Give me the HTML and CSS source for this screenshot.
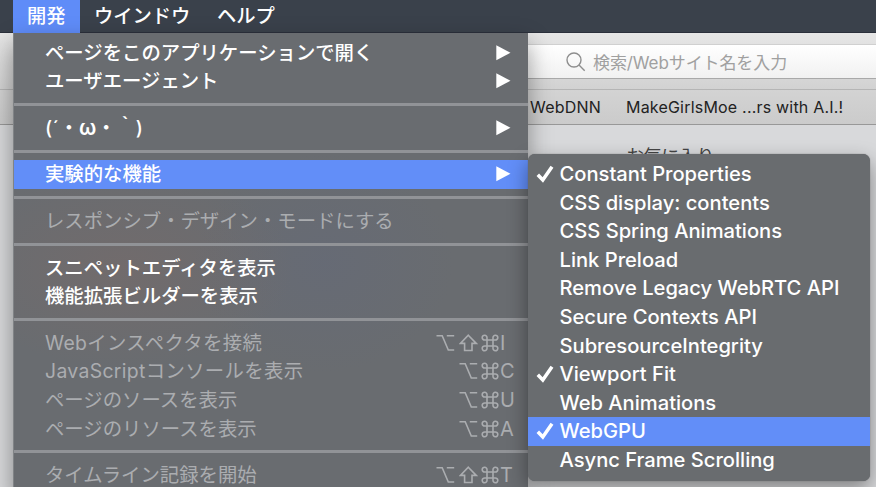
FILE: index.html
```html
<!DOCTYPE html>
<html lang="ja">
<head>
<meta charset="utf-8">
<title>開発</title>
<link rel="stylesheet" href="styles.css">
</head>
<body>
<svg width="0" height="0" class="defs" aria-hidden="true">
  <symbol id="option" viewBox="0 0 19 18"><path d="M0.5 1.8H6.2L12.3 16H18.2M10.8 1.8H18.2"/></symbol>
  <symbol id="shift" viewBox="0 0 19 18"><path d="M9.3 1.2L17.2 9.4H13V16.5H5.6V9.4H1.4Z"/></symbol>
  <symbol id="command" viewBox="0 0 18 18"><path d="M6 6H12V12H6ZM6 6H3.7A2.4 2.4 0 1 1 6 3.7ZM12 6V3.7A2.4 2.4 0 1 1 14.3 6ZM12 12H14.3A2.4 2.4 0 1 1 12 14.3ZM6 12V14.3A2.4 2.4 0 1 1 3.7 12Z"/></symbol>
  <symbol id="check" viewBox="0 0 18 18"><path d="M1.8 9.8L6.8 15L16 1.8"/></symbol>
  <symbol id="arrow" viewBox="0 0 15 16"><path d="M0.3 0.3L14.5 7.8L0.3 15.2Z"/></symbol>
</svg>

<header class="menubar">
  <span class="bar-item active">開発</span>
  <span class="bar-item window">ウインドウ</span>
  <span class="bar-item help">ヘルプ</span>
</header>

<main class="browser">
  <div class="toolbar">
    <div class="search">
      <svg class="lens" viewBox="0 0 20 20"><circle cx="8" cy="8" r="7"/><path d="M13 13L18.7 18.7"/></svg>
      <span>検索/Webサイト名を入力</span>
    </div>
  </div>
  <nav class="favorites"><span class="fav-dnn">WebDNN</span><span class="fav-moe">MakeGirlsMoe ...rs with A.I.!</span></nav>
  <section class="page"><h2>お気に入り</h2></section>
</main>

<div class="menu main-menu">
  <div class="row"><span>ページをこのアプリケーションで開く</span><svg class="arrow"><use href="#arrow"/></svg></div>
  <div class="row"><span>ユーザエージェント</span><svg class="arrow"><use href="#arrow"/></svg></div>
  <div class="sep"></div>
  <div class="row"><span class="face">(´・<span class="omega">ω</span>・｀)</span><svg class="arrow"><use href="#arrow"/></svg></div>
  <div class="sep"></div>
  <div class="row selected"><span>実験的な機能</span><svg class="arrow"><use href="#arrow"/></svg></div>
  <div class="sep"></div>
  <div class="row disabled"><span>レスポンシブ・デザイン・モードにする</span></div>
  <div class="sep"></div>
  <div class="row"><span>スニペットエディタを表示</span></div>
  <div class="row"><span>機能拡張ビルダーを表示</span></div>
  <div class="sep"></div>
  <div class="row disabled"><span class="latin">Webインスペクタを接続</span><span class="keys"><svg><use href="#option"/></svg><svg><use href="#shift"/></svg><svg class="cmd"><use href="#command"/></svg><b>I</b></span></div>
  <div class="row disabled"><span class="latin">JavaScriptコンソールを表示</span><span class="keys"><svg><use href="#option"/></svg><svg class="cmd"><use href="#command"/></svg><b>C</b></span></div>
  <div class="row disabled"><span>ページのソースを表示</span><span class="keys"><svg><use href="#option"/></svg><svg class="cmd"><use href="#command"/></svg><b>U</b></span></div>
  <div class="row disabled"><span>ページのリソースを表示</span><span class="keys"><svg><use href="#option"/></svg><svg class="cmd"><use href="#command"/></svg><b>A</b></span></div>
  <div class="sep"></div>
  <div class="row disabled"><span>タイムライン記録を開始</span><span class="keys"><svg><use href="#option"/></svg><svg><use href="#shift"/></svg><svg class="cmd"><use href="#command"/></svg><b>T</b></span></div>
</div>

<div class="menu submenu">
  <div class="row checked"><svg class="check"><use href="#check"/></svg><span>Constant Properties</span></div>
  <div class="row"><span>CSS display: contents</span></div>
  <div class="row"><span>CSS Spring Animations</span></div>
  <div class="row"><span>Link Preload</span></div>
  <div class="row"><span>Remove Legacy WebRTC API</span></div>
  <div class="row"><span>Secure Contexts API</span></div>
  <div class="row"><span>SubresourceIntegrity</span></div>
  <div class="row checked"><svg class="check"><use href="#check"/></svg><span>Viewport Fit</span></div>
  <div class="row"><span>Web Animations</span></div>
  <div class="row checked selected"><svg class="check"><use href="#check"/></svg><span>WebGPU</span></div>
  <div class="row"><span>Async Frame Scrolling</span></div>
</div>
</body>
</html>
```

FILE: styles.css
```css
* { box-sizing: border-box; }

body {
  margin: 0;
  width: 876px;
  height: 487px;
  overflow: hidden;
  position: relative;
  display: flex;
  flex-direction: column;
  background: #d8d9db;
  font-family: Inter, "Noto Sans CJK JP", sans-serif;
  white-space: nowrap;
}

.defs { position: absolute; }

.menubar {
  height: 33px;
  flex: none;
  display: flex;
  padding-left: 13px;
  background: #3a414b;
  border-bottom: 1px solid #2b303b;
  color: #fff;
  font-size: 19.3px;
  font-weight: 500;
  line-height: 33px;
}

.bar-item.active {
  width: 67px;
  height: 33px;
  padding-left: 14px;
  background: #5f8cf8;
}

.bar-item.window { padding-left: 14px; width: 137px; }

.browser { flex: 1; display: flex; flex-direction: column; }

.toolbar {
  height: 57px;
  flex: none;
  padding: 11px 0 0 300px;
  background: linear-gradient(#e6e6e6, #d2d2d2);
  border-bottom: 1px solid #b5b5b5;
}

.search {
  height: 35px;
  display: flex;
  align-items: center;
  gap: 7px;
  padding-left: 266px;
  background: linear-gradient(#fff, #f1f1f1);
  border-top: 1px solid #d0d0d0;
  border-bottom: 1px solid #a9a9a9;
  color: #a0a0a0;
  font-size: 17px;
  letter-spacing: -0.1px;
}

.lens {
  width: 20px;
  height: 20px;
  fill: none;
  stroke: #8e8e8e;
  stroke-width: 1.4;
}

.favorites {
  height: 35px;
  flex: none;
  display: flex;
  align-items: center;
  padding-left: 530px;
  background: linear-gradient(#d3d3d3, #cbcbcb);
  border-bottom: 1px solid #989898;
  color: #222;
  font-size: 16px;
  letter-spacing: 0.2px;
}

.fav-dnn { width: 96px; }

.page { flex: 1; padding: 20px 0 0 626px; }

.page h2 {
  margin: 0;
  color: #444;
  font-size: 18px;
  line-height: 24px;
  font-weight: 400;
  letter-spacing: -0.4px;
}

.menu {
  position: absolute;
  color: #fff;
}

.row {
  height: 28.6px;
  display: flex;
  align-items: center;
  line-height: 28px;
}

.main-menu {
  left: 13px;
  top: 33px;
  width: 515px;
  height: 460px;
  padding-top: 5.3px;
  background:
    radial-gradient(ellipse 170px 100px at 110px 235px, rgba(126, 106, 102, .4), transparent),
    radial-gradient(ellipse 130px 110px at 310px 230px, rgba(97, 104, 126, .35), transparent),
    #696c70;
  border-left: 1px solid #808386;
  box-shadow: 0 10px 22px rgba(0, 0, 0, .38);
  font-size: 19.37px;
  font-weight: 500;
}

.main-menu .row { padding: 0 17px 0 31px; justify-content: space-between; }

.sep { height: 18px; padding-top: 7.5px; }

.sep::before {
  content: "";
  display: block;
  height: 3px;
  background: #919397;
}

.row.selected { background: #628ef8; }

.main-menu .disabled { color: #abadb0; font-weight: 400; padding-right: 0; }

.main-menu .latin { letter-spacing: 0.35px; }

.face { letter-spacing: 0.3px; }

.omega { font-size: 21px; font-weight: 600; }

.arrow { width: 15px; height: 16px; fill: #fff; }

.keys { display: flex; align-items: center; }

.keys svg {
  width: 19px;
  height: 18px;
  margin-right: 3.5px;
  fill: none;
  stroke: #abadb0;
  stroke-width: 1.6;
}

.keys .cmd { width: 18px; margin-right: 1px; }

.keys b { width: 28px; font-size: 20px; font-weight: 400; }

.submenu {
  left: 528px;
  top: 154px;
  width: 342px;
  height: 327px;
  padding-top: 5.7px;
  border-radius: 7px;
  background: #696c6f;
  box-shadow: 0 0 1px #505357, 0 8px 20px rgba(0, 0, 0, .4);
  font-size: 20.15px;
  font-weight: 500;
}

.submenu .row { padding-left: 31.5px; }

.submenu .checked { padding-left: 8px; }

.check {
  width: 18px;
  height: 18px;
  margin-right: 5.5px;
  fill: none;
  stroke: #fff;
  stroke-width: 3.5;
}
```
